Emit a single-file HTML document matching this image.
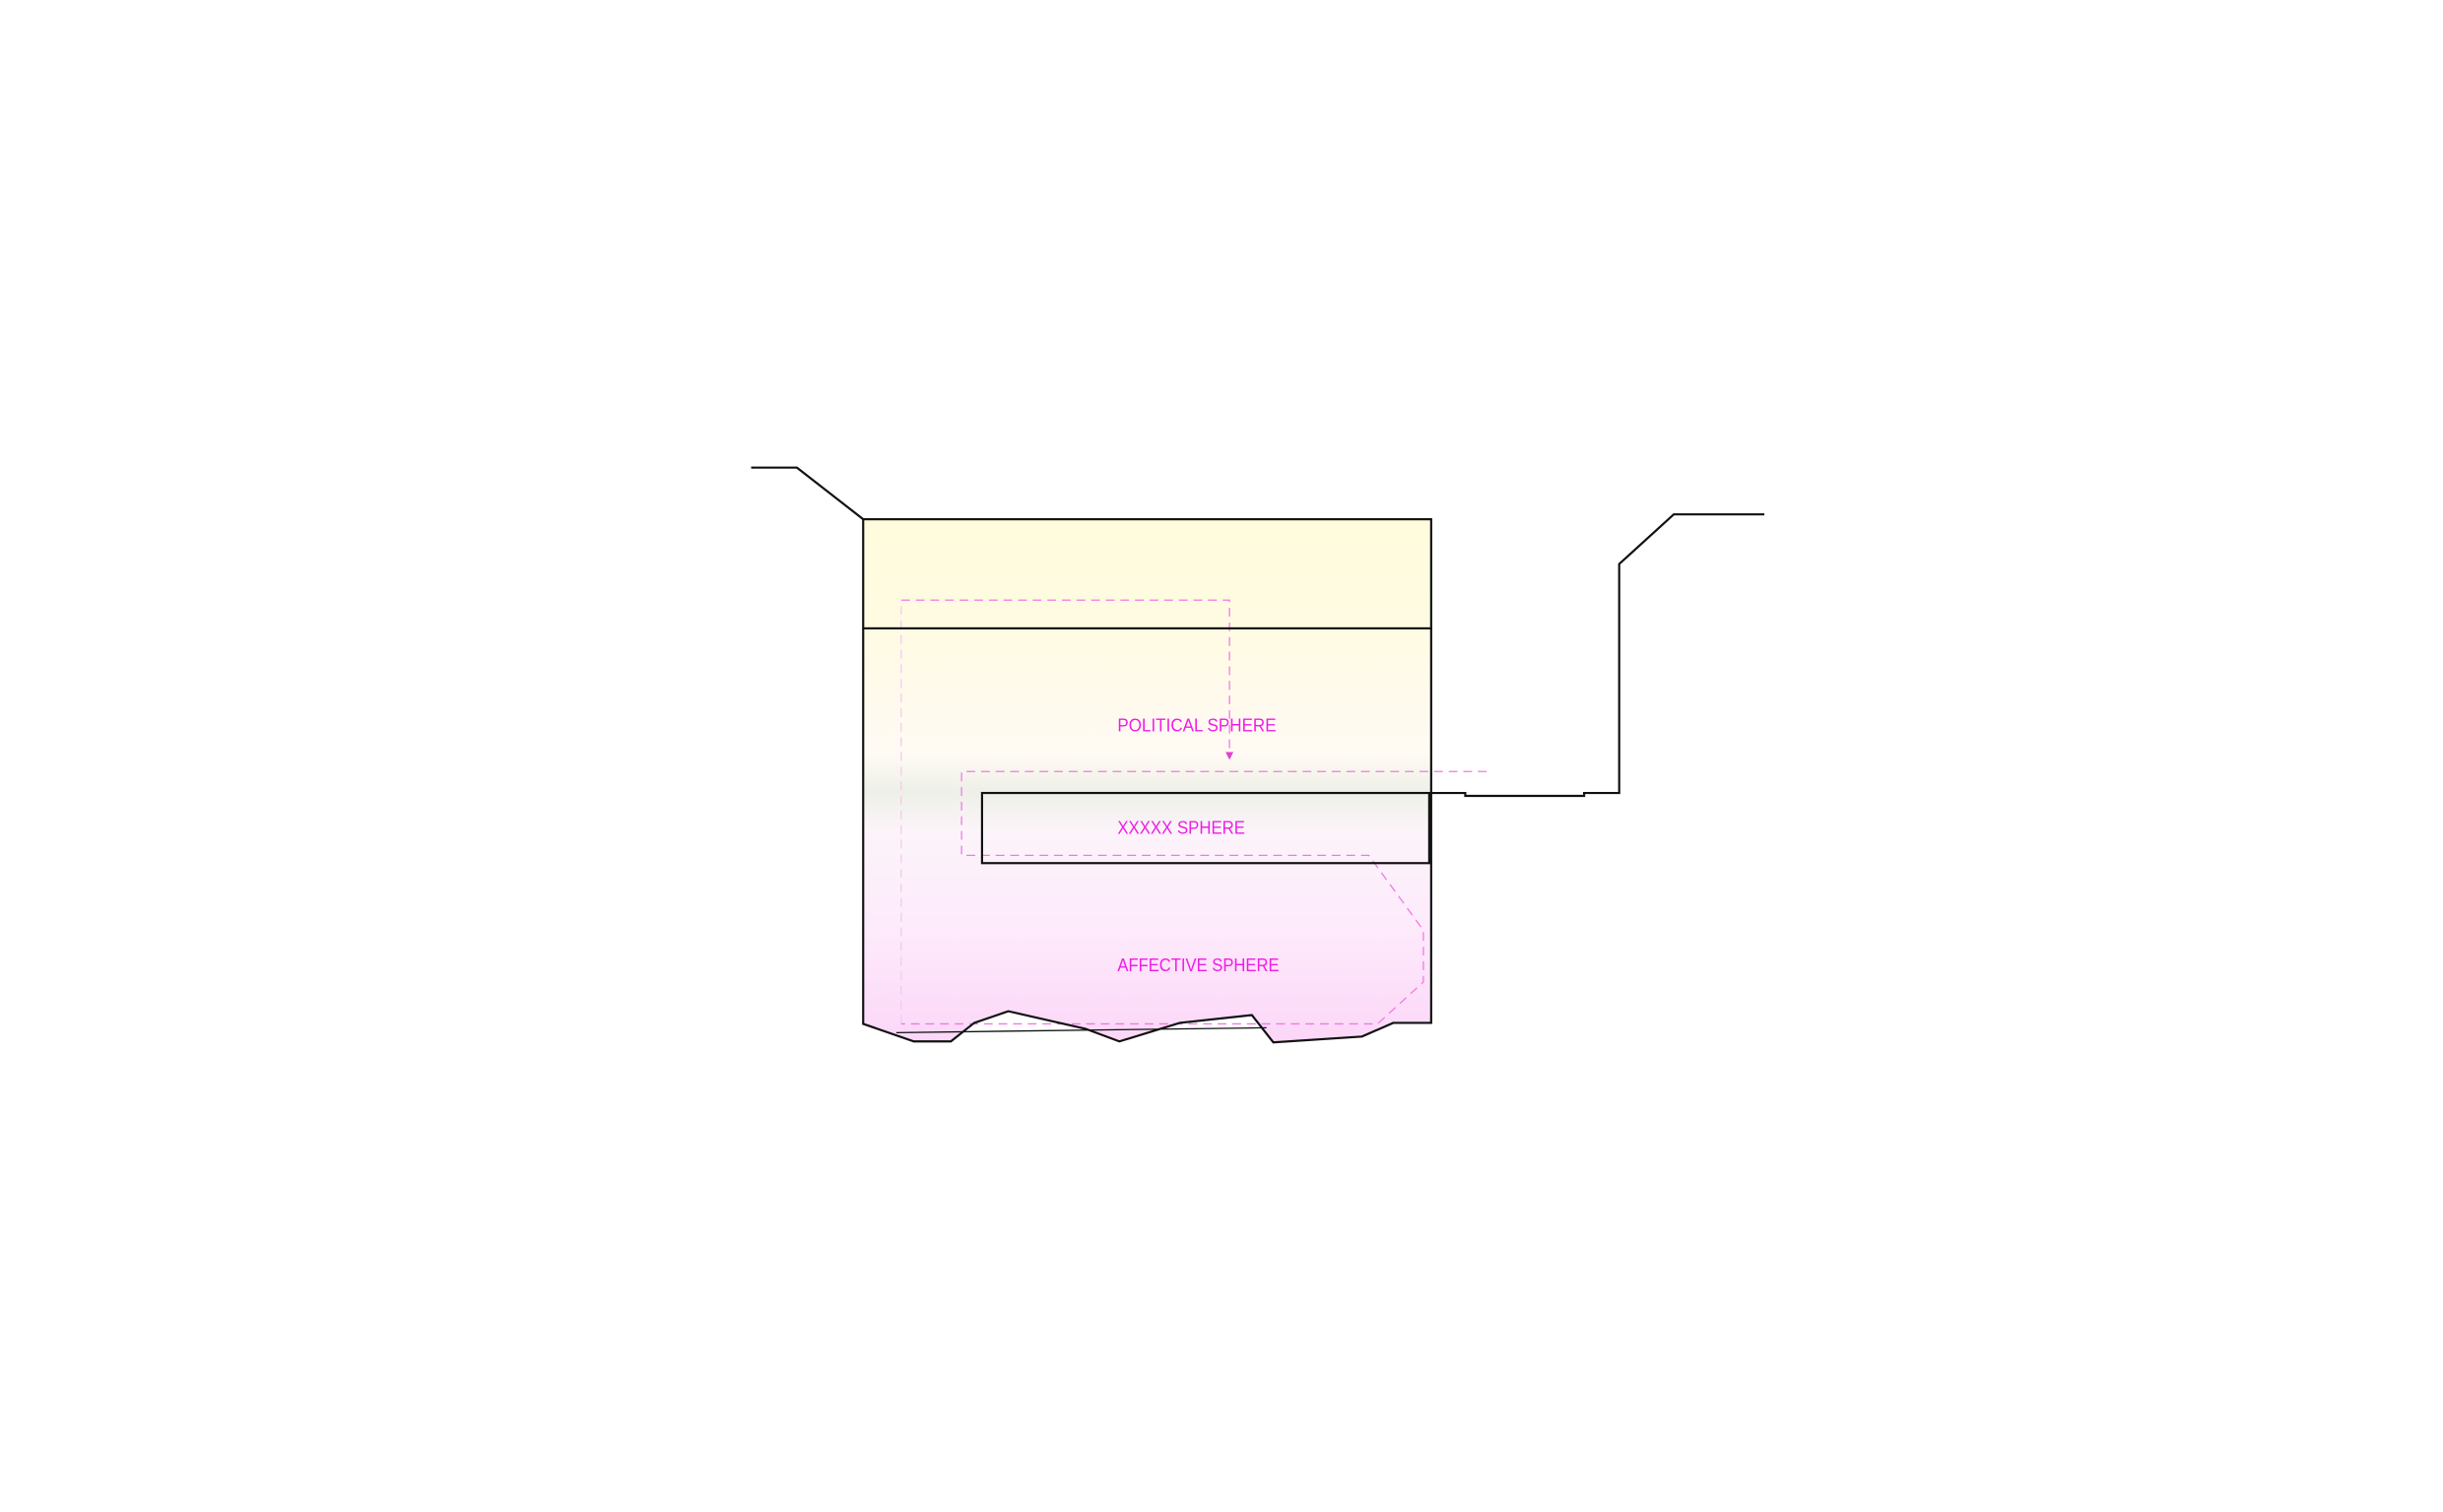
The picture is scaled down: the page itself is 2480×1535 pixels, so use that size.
<!DOCTYPE html>
<html><head><meta charset="utf-8"><style>
html,body{margin:0;padding:0;background:#fff;width:2480px;height:1535px;overflow:hidden}
</style></head><body>
<svg width="2480" height="1535" viewBox="0 0 2480 1535" xmlns="http://www.w3.org/2000/svg">
<defs>
<linearGradient id="g" x1="0" y1="533" x2="0" y2="1070" gradientUnits="userSpaceOnUse">
<stop offset="0" stop-color="#fffbdc"/>
<stop offset="0.2" stop-color="#fffbe2"/>
<stop offset="0.45" stop-color="#fffaf4"/>
<stop offset="0.52" stop-color="#eef0e8"/>
<stop offset="0.6" stop-color="#fcf4fa"/>
<stop offset="0.8" stop-color="#fde9fb"/>
<stop offset="1" stop-color="#fcd6f8"/>
</linearGradient>
</defs>
<g transform="scale(0.989)">
<polygon points="886,533 1469,533 1469,1050 1430,1050 1398,1064 1307,1070 1285,1042 1211,1050 1149,1069 1114,1056 1035,1038 1000,1050 976,1069 938,1069 886,1051" fill="url(#g)"/>
<g fill="none" stroke="#f07ae0" stroke-width="1.3" stroke-dasharray="9,6">
<polyline points="925,616 1262,616 1262,776"/>
<polyline points="925,1051 925,616" stroke="#f5c8ee"/>
<polyline points="1526,792 987,792 987,878 1405,878 1461,955 1461,1008 1414,1051 925,1051"/>
</g>
<polygon points="1258,772 1266,772 1262,780" fill="#e040d0"/>
<g fill="none" stroke="#111" stroke-width="2.2" stroke-linejoin="miter">
<polyline points="771,480 818,480 886,533"/>
<rect x="886" y="533" width="583" height="112"/>
<polyline points="886,645 886,1051 938,1069 976,1069 1000,1050 1035,1038 1114,1056 1149,1069 1211,1050 1285,1042 1307,1070 1398,1064 1430,1050 1469,1050 1469,645"/>
<line x1="920" y1="1060" x2="1300" y2="1055" stroke-width="1.3"/>
<rect x="1008" y="814" width="459" height="72"/>
<polyline points="1467,814 1504,814 1504,817 1626,817 1626,814 1662,814 1662,579 1718,528 1811,528"/>
</g>
<g fill="#f01ce8" font-family="Liberation Sans, sans-serif" font-size="19">
<text x="1147" y="751" textLength="163" lengthAdjust="spacingAndGlyphs">POLITICAL SPHERE</text>
<text x="1147" y="856" textLength="131" lengthAdjust="spacingAndGlyphs">XXXXX SPHERE</text>
<text x="1147" y="997" textLength="166" lengthAdjust="spacingAndGlyphs">AFFECTIVE SPHERE</text>
</g>
</g>
</svg>
</body></html>
